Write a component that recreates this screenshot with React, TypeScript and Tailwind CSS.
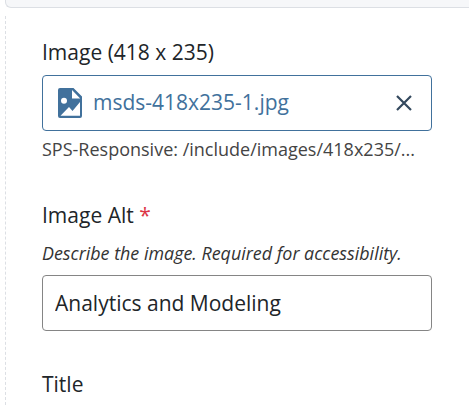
export default function App() {
  return (
    <div className="w-[469px] h-[405px] overflow-hidden bg-white font-['Open_Sans',sans-serif] text-[#212529]">
      <div className="h-2 ml-[5px] bg-[#f6f7f9] border-l border-b border-[#dcdfe4] rounded-bl-md" />
      <div className="mt-2 ml-[5px] h-[389px] border-l border-dashed border-[#dcdfe4] pl-[36px] pt-[22px] w-[427px] box-border">
        <div className="text-[21px] leading-[28px]">Image (418 x 235)</div>
        <div className="mt-[9px] h-[56px] border border-[#41719c] rounded flex items-center pl-[15px] pr-[19px]">
          <svg width="24" height="30" viewBox="0 0 24 30" className="shrink-0">
            <path fill="#41719c" fillRule="evenodd" d="M2 0H15.5L24 8.5V28a2 2 0 0 1-2 2H2a2 2 0 0 1-2-2V2A2 2 0 0 1 2 0ZM14 2V10.5H22.2ZM6 9.7a3 3 0 1 0 0 6a3 3 0 0 0 0-6ZM2.5 27.7H22V14L14.5 23L11 19Z" />
          </svg>
          <span className="ml-[11px] text-[21px] text-[#41719c] flex-1">msds-418x235-1.jpg</span>
          <svg width="16" height="16" viewBox="0 0 16 16" fill="none" stroke="#34495e" strokeWidth="2.2">
            <path d="M1 1L15 15M15 1L1 15" />
          </svg>
        </div>
        <div className="mt-[5px] text-lg leading-[26px] text-[#444]">SPS-Responsive: /include/images/418x235/...</div>
        <div className="mt-[39px] text-[21px] leading-[28px]">Image Alt <span className="text-[#dc3545]">*</span></div>
        <div className="mt-[11px] text-[17.9px] italic leading-[26px] text-[#333]">Describe the image. Required for accessibility.</div>
        <input readOnly value="Analytics and Modeling" className="mt-[9px] block w-full h-[56px] border border-[#858585] rounded px-3 text-[21px] outline-none" />
        <div className="mt-[39px] text-[21px] leading-[28px]">Title</div>
      </div>
    </div>
  );
}
